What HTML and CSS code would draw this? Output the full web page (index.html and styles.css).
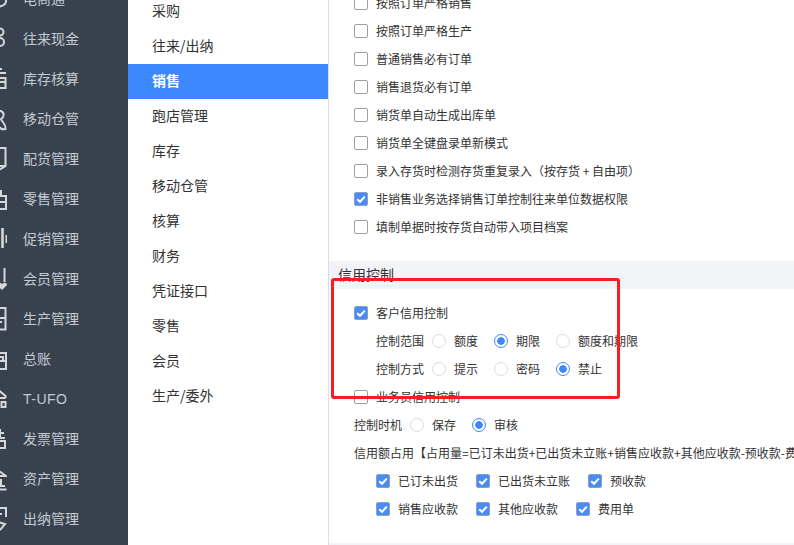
FILE: index.html
```html
<!DOCTYPE html>
<html lang="zh-CN">
<head>
<meta charset="utf-8">
<title>销售设置</title>
<link rel="stylesheet" href="styles.css">
</head>
<body>
<div class="app">
  <nav class="side">
    <ul class="side-list">
      <li class="side-item"><svg class="ico" viewBox="-13 -12 20 24"><path d="M-10 -4v3a9 9 0 0 0 15 6a9 9 0 0 0 1-6v-3"/></svg>电商通</li>
      <li class="side-item"><svg class="ico" viewBox="-13 -12 20 24"><circle cx="0" cy="-7" r="3.5"/><circle cx="0" cy="3" r="4"/></svg>往来现金</li>
      <li class="side-item"><svg class="ico" viewBox="-13 -12 20 24"><path d="M-8 -10H2M-8 -6H6M-8 -1H5.500V9H-8M-1 3H5"/></svg>库存核算</li>
      <li class="side-item"><svg class="ico" viewBox="-13 -12 20 24"><path d="M-5 -8H1C5 -6 4 -2 1 0C2 3 6 5 5.500 10C3 11 1 10 -1 8"/></svg>移动仓管</li>
      <li class="side-item"><svg class="ico" viewBox="-13 -12 20 24"><path d="M-10 -11H5.500V7L0 10.500M5.500 7H-10"/></svg>配货管理</li>
      <li class="side-item"><svg class="ico" viewBox="-13 -12 20 24"><path d="M-3 -3V-8H1V-3M-10 -3H6V10H-10M-4 3H6"/></svg>零售管理</li>
      <li class="side-item"><svg class="ico" viewBox="-13 -12 20 24"><path d="M2.500 -11V9" stroke-width="2.600"/><path d="M6.500 -4V4"/></svg>促销管理</li>
      <li class="side-item"><svg class="ico" viewBox="-13 -12 20 24"><path d="M4.500 -11V3"/><path class="fill" d="M2 11L-3 6C-3 3 1 3 2 5.500C3 3 7 3 7 6Z"/></svg>会员管理</li>
      <li class="side-item"><svg class="ico" viewBox="-13 -12 20 24"><path d="M-10 -11H5.500V10.500H-10M-1 -1H5M-1 3H2"/></svg>生产管理</li>
      <li class="side-item"><svg class="ico" viewBox="-13 -12 20 24"><path d="M-8 -10H0M-10 -6H6V10H-10M-3 2V-2H3V2M-3 2H5"/></svg>总账</li>
      <li class="side-item side-latin"><svg class="ico" viewBox="-13 -12 20 24"><path d="M-4 -11L5.500 -3V-1M-10 -1H5.500"/><rect x="1.500" y="3" width="4" height="5"/></svg>T-UFO</li>
      <li class="side-item"><svg class="ico" viewBox="-13 -12 20 24"><path d="M0 -10V-2M-6 -6H4M-6 -1H5M-6 2H5V9H-6"/></svg>发票管理</li>
      <li class="side-item"><svg class="ico" viewBox="-13 -12 20 24"><path d="M-8 -3L-1 -8L6 -3H-8M1 0V7M-8 7H5M-8 10.500H6.500"/></svg>资产管理</li>
      <li class="side-item"><svg class="ico" viewBox="-13 -12 20 24"><path d="M-8 -11H6V-2M-8 -5H2M-6 2L5 5L0 11"/></svg>出纳管理</li>
    </ul>
  </nav>
  <aside class="cats">
    <ul class="cat-list">
      <li class="cat">采购</li>
      <li class="cat">往来/出纳</li>
      <li class="cat cat-on">销售</li>
      <li class="cat">跑店管理</li>
      <li class="cat">库存</li>
      <li class="cat">移动仓管</li>
      <li class="cat">核算</li>
      <li class="cat">财务</li>
      <li class="cat">凭证接口</li>
      <li class="cat">零售</li>
      <li class="cat">会员</li>
      <li class="cat">生产/委外</li>
    </ul>
  </aside>
  <main class="panel">
    <section class="group first">
      <div class="row"><i class="box"></i>按照订单严格销售</div>
      <div class="row"><i class="box"></i>按照订单严格生产</div>
      <div class="row"><i class="box"></i>普通销售必有订单</div>
      <div class="row"><i class="box"></i>销售退货必有订单</div>
      <div class="row"><i class="box"></i>销货单自动生成出库单</div>
      <div class="row"><i class="box"></i>销货单全键盘录单新模式</div>
      <div class="row"><i class="box"></i>录入存货时检测存货重复录入（按存货 + 自由项）</div>
      <div class="row"><i class="box on"><svg viewBox="0 0 14 14"><path d="M3.200 7.200L6 9.800L10.800 4.600"/></svg></i>非销售业务选择销售订单控制往来单位数据权限</div>
      <div class="row"><i class="box"></i>填制单据时按存货自动带入项目档案</div>
    </section>
    <h2 class="head">信用控制</h2>
    <section class="group">
      <div class="row"><i class="box on"><svg viewBox="0 0 14 14"><path d="M3.200 7.200L6 9.800L10.800 4.600"/></svg></i>客户信用控制</div>
      <div class="row indent"><span class="lbl">控制范围</span>
        <span class="opt"><i class="radio"></i>额度</span>
        <span class="opt"><i class="radio on"></i>期限</span>
        <span class="opt"><i class="radio"></i>额度和期限</span>
      </div>
      <div class="row indent"><span class="lbl">控制方式</span>
        <span class="opt"><i class="radio"></i>提示</span>
        <span class="opt"><i class="radio"></i>密码</span>
        <span class="opt"><i class="radio on"></i>禁止</span>
      </div>
      <div class="row"><i class="box"></i>业务员信用控制</div>
      <div class="row"><span class="lbl">控制时机</span>
        <span class="opt"><i class="radio"></i>保存</span>
        <span class="opt"><i class="radio on"></i>审核</span>
      </div>
      <div class="row nowrap">信用额占用【占用量=已订未出货+已出货未立账+销售应收款+其他应收款-预收款-费用单】</div>
      <div class="row indent checks">
        <span class="chk"><i class="box on"><svg viewBox="0 0 14 14"><path d="M3.200 7.200L6 9.800L10.800 4.600"/></svg></i>已订未出货</span>
        <span class="chk"><i class="box on"><svg viewBox="0 0 14 14"><path d="M3.200 7.200L6 9.800L10.800 4.600"/></svg></i>已出货未立账</span>
        <span class="chk"><i class="box on"><svg viewBox="0 0 14 14"><path d="M3.200 7.200L6 9.800L10.800 4.600"/></svg></i>预收款</span>
      </div>
      <div class="row indent checks">
        <span class="chk"><i class="box on"><svg viewBox="0 0 14 14"><path d="M3.200 7.200L6 9.800L10.800 4.600"/></svg></i>销售应收款</span>
        <span class="chk"><i class="box on"><svg viewBox="0 0 14 14"><path d="M3.200 7.200L6 9.800L10.800 4.600"/></svg></i>其他应收款</span>
        <span class="chk"><i class="box on"><svg viewBox="0 0 14 14"><path d="M3.200 7.200L6 9.800L10.800 4.600"/></svg></i>费用单</span>
      </div>
    </section>
    <div class="foot"></div>
    <div class="mark"></div>
  </main>
</div>
</body>
</html>
```
FILE: styles.css
```css
* { box-sizing: border-box; }
html, body { margin: 0; padding: 0; height: 100%; overflow: hidden; background: #fff; }
body { font-family: "Noto Sans CJK SC", "Liberation Sans", sans-serif; color: #333; }
ul { list-style: none; margin: 0; padding: 0; }
i { font-style: normal; }

.app { display: flex; width: 794px; height: 545px; overflow: hidden; }

.side { flex: 0 0 128px; background: #38424f; overflow: hidden; }
.side-list { margin-top: -21px; }
.side-item {
  display: flex; align-items: center; height: 40px; padding-bottom: 2px;
  font-size: 14px; color: #c4cad1; white-space: nowrap;
}
.side-latin { font-family: "Liberation Sans", sans-serif; letter-spacing: 0.5px; padding-bottom: 0; }
.ico {
  flex: none; width: 20px; height: 24px; margin: 2px 16px 0 -13px;
  fill: none; stroke: #d4d7dc; stroke-width: 2;
}
.side-latin .ico { margin-top: 0; }
.ico .fill { fill: #d4d7dc; stroke: none; }

.cats { flex: 0 0 201px; background: #fff; border-right: 1px solid #ddd; overflow: hidden; }
.cat-list { margin-top: -6px; }
.cat {
  display: flex; align-items: center; height: 35px; padding: 0 0 4px 24px;
  font-size: 14px; color: #333;
}
.cat-on { background: #3d87ff; color: #fff; font-weight: 700; }

.panel { position: relative; flex: 1; min-width: 0; overflow: hidden; font-size: 12px; }
.group { padding-left: 25px; }
.group.first { margin-top: -11px; margin-bottom: 20px; }
.head {
  margin: 0 0 10px; height: 28px; padding: 0 0 2px 9px;
  display: flex; align-items: center;
  font-size: 14px; font-weight: 400; background: #f2f3f7; color: #333;
}
.foot { margin-top: 20px; height: 10px; background: #f2f3f7; }

.row { display: flex; align-items: center; height: 28px; padding-bottom: 2px; white-space: nowrap; }
.indent { padding-left: 22px; }
.nowrap { overflow: visible; }
.lbl { margin-right: 8px; }
.opt { display: inline-flex; align-items: center; margin-right: 16px; }
.chk { display: inline-flex; align-items: center; margin-right: 18px; }

.box {
  flex: none; display: block; width: 14px; height: 14px; margin: 2px 8px 0 0;
  border: 1px solid #a0a0a0; border-radius: 2px; background: #fff;
}
.box.on { background: #4a8cf5; border-color: #8aa0c0; }
.box svg { display: block; width: 14px; height: 14px; margin: -1px; fill: none; stroke: #fff; stroke-width: 2; }

.radio {
  flex: none; display: block; width: 14px; height: 14px; margin: 2px 8px 0 0;
  border: 1px solid #dcdcdc; border-radius: 50%; background: #fff;
}
.radio.on { border-color: #3d87ff; background: radial-gradient(circle, #3d87ff 0 3.5px, #fff 4px); }

.mark {
  position: absolute; left: 2px; top: 278px; width: 289px; height: 121px;
  border: 3px solid #fb1d1d; border-radius: 3px;
}
```
